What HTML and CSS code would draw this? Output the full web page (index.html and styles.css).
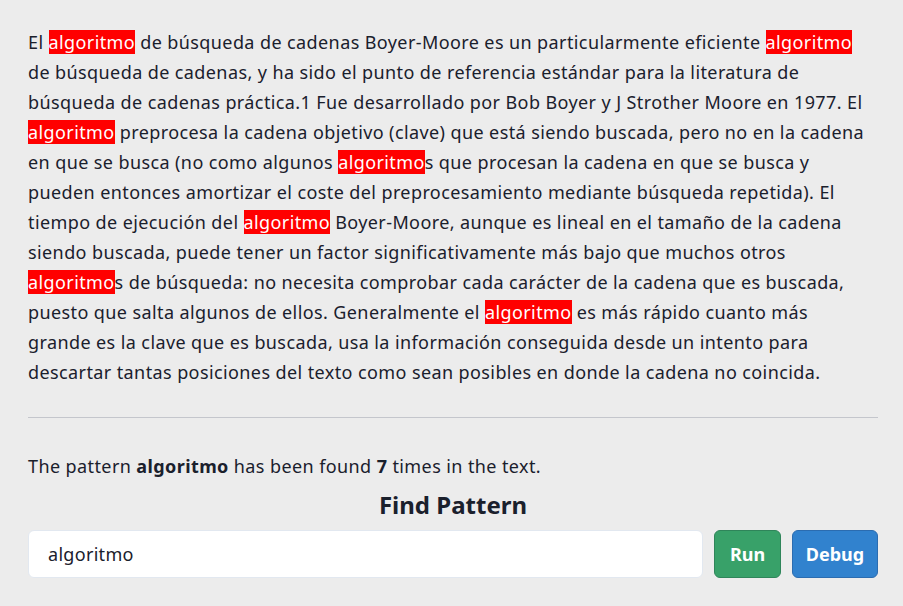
FILE: index.html
```html
<!DOCTYPE html>
<html>
<head>
<meta charset="utf-8">
<link rel="stylesheet" href="styles.css">
</head>
<body>
<main class="page">
  <p class="text">El <span class="hl">algoritmo</span> de búsqueda de cadenas Boyer-Moore es un particularmente eficiente <span class="hl">algoritmo</span> de búsqueda de cadenas, y ha sido el punto de referencia estándar para la literatura de búsqueda de cadenas práctica.1 Fue desarrollado por Bob Boyer y J Strother Moore en 1977. El <span class="hl">algoritmo</span> preprocesa la cadena objetivo (clave) que está siendo buscada, pero no en la cadena en que se busca (no como algunos <span class="hl">algoritmo</span>s que procesan la cadena en que se busca y pueden entonces amortizar el coste del preprocesamiento mediante búsqueda repetida). El tiempo de ejecución del <span class="hl">algoritmo</span> Boyer-Moore, aunque es lineal en el tamaño de la cadena siendo buscada, puede tener un factor significativamente más bajo que muchos otros <span class="hl">algoritmo</span>s de búsqueda: no necesita comprobar cada carácter de la cadena que es buscada, puesto que salta algunos de ellos. Generalmente el <span class="hl">algoritmo</span> es más rápido cuanto más grande es la clave que es buscada, usa la información conseguida desde un intento para descartar tantas posiciones del texto como sean posibles en donde la cadena no coincida.</p>
  <hr class="divider">
  <p class="result">The pattern <b>algoritmo</b> has been found <b>7</b> times in the text.</p>
  <h2 class="title">Find Pattern</h2>
  <div class="controls">
    <input class="field" type="text" value="algoritmo">
    <button class="btn btn-run">Run</button>
    <button class="btn btn-debug">Debug</button>
  </div>
</main>
</body>
</html>
```

FILE: styles.css
```css
html, body {
  margin: 0;
  padding: 0;
  background: #ececec;
}
body {
  font-family: "Noto Sans", "Open Sans", sans-serif;
  color: #1a202c;
  font-size: 18px;
}
.page {
  width: 850px;
  padding: 27px 0 0 28px;
}
.text {
  margin: 0;
  padding-right: 4px;
  line-height: 30px;
  letter-spacing: 0.4px;
}
.hl {
  background: #ff0000;
  color: #ffffff;
}
.divider {
  margin: 30px 0 0 0;
  border: 0;
  border-top: 1px solid #c4c6cc;
  height: 0;
}
.result {
  margin: 33px 0 0 0;
  line-height: 30px;
  letter-spacing: 0.4px;
}
.title {
  margin: 9px 0 0 0;
  text-align: center;
  font-size: 24px;
  line-height: 30px;
  font-weight: 700;
}
.controls {
  display: flex;
  gap: 11px;
  margin-top: 10px;
}
.field {
  flex: 1;
  height: 48px;
  box-sizing: border-box;
  border: 1px solid #e2e8f0;
  border-radius: 6px;
  background: #fff;
  padding: 0 19px;
  font: inherit;
  font-size: 18px;
  letter-spacing: 0.3px;
  color: #1a202c;
  outline: none;
}
.btn {
  height: 48px;
  box-sizing: border-box;
  padding: 0;
  border-radius: 6px;
  color: #fff;
  font-family: inherit;
  font-size: 18px;
  font-weight: 700;
  text-align: center;
  cursor: pointer;
}
.btn-run {
  width: 67px;
  background: #38a169;
  border: 1px solid #2f855a;
}
.btn-debug {
  width: 86px;
  background: #3182ce;
  border: 1px solid #2b6cb0;
}
```
